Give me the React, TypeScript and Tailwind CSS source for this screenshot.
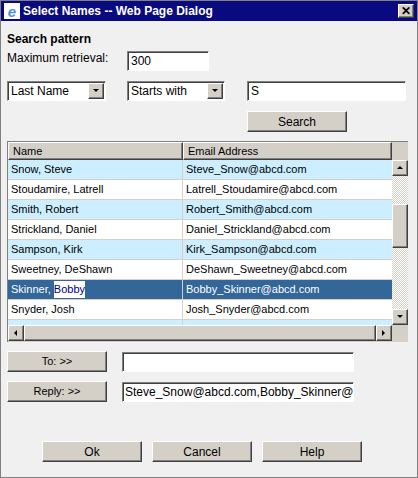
import React from "react";

const F = { fontFamily: '"Liberation Sans", Arial, sans-serif' };
const btn = "bg-[#d4d0c8] border border-t-white border-l-white border-r-[#404040] border-b-[#404040] shadow-[inset_-1px_-1px_0_#808080] text-[12px] text-black flex items-center justify-center";
const inset = "bg-white border border-t-[#808080] border-l-[#808080] border-r-white border-b-white shadow-[inset_1px_1px_0_#404040]";

const rows = [
  ["Snow, Steve", "Steve_Snow@abcd.com"],
  ["Stoudamire, Latrell", "Latrell_Stoudamire@abcd.com"],
  ["Smith, Robert", "Robert_Smith@abcd.com"],
  ["Strickland, Daniel", "Daniel_Strickland@abcd.com"],
  ["Sampson, Kirk", "Kirk_Sampson@abcd.com"],
  ["Sweetney, DeShawn", "DeShawn_Sweetney@abcd.com"],
  ["Skinner, Bobby", "Bobby_Skinner@abcd.com"],
  ["Snyder, Josh", "Josh_Snyder@abcd.com"],
];

function Arrow({ d }: { d: "up" | "down" | "left" | "right" }) {
  const pts = { up: "1,5 4,2 7,5", down: "1,2 4,5 7,2", left: "5,1 2,4 5,7", right: "2,1 5,4 2,7" }[d];
  return <svg width="8" height="8" viewBox="0 0 8 8"><polygon points={pts} fill="#000" /></svg>;
}

function Select({ label, w }: { label: string; w: string }) {
  return (
    <div className={`${inset} ${w} h-[20px] flex items-center justify-between pl-[3px] pr-[1px]`}>
      <span className="text-[12px] leading-none">{label}</span>
      <div className={`${btn} w-[16px] h-[16px]`}><Arrow d="down" /></div>
    </div>
  );
}

export default function App() {
  return (
    <div style={F} className="w-[418px] h-[478px] bg-[#f0f0f0] border border-[#808080] flex flex-col text-[12px] text-black overflow-hidden">
      <div className="h-[20px] bg-[#0a0a80] flex items-center justify-between px-[3px] shrink-0">
        <div className="flex items-center gap-[3px]">
          <div className="w-[16px] h-[16px] flex items-center justify-center text-[#4a90e8] font-bold italic text-[15px] bg-white leading-none">e</div>
          <span className="text-white font-bold text-[12px]">Select Names -- Web Page Dialog</span>
        </div>
        <div className={`${btn} w-[16px] h-[14px] text-[11px] font-bold`}>✕</div>
      </div>
      <div className="flex flex-col pl-[6px] pr-[10px]">
        <div className="font-bold mt-[11px] h-[15px] leading-[15px]">Search pattern</div>
        <div className="flex items-start mt-[4px] h-[21px]">
          <span className="w-[120px] leading-[15px]">Maximum retrieval:</span>
          <div className={`${inset} w-[82px] h-[20px] flex items-center pl-[3px]`}>300</div>
        </div>
        <div className="flex mt-[9px] h-[20px]">
          <Select label="Last Name" w="w-[99px]" />
          <div className="w-[21px]" />
          <Select label="Starts with" w="w-[98px]" />
          <div className="w-[22px]" />
          <div className={`${inset} w-[159px] h-[20px] flex items-center pl-[3px]`}>S</div>
        </div>
        <div className="flex mt-[10px]">
          <div className="w-[240px]" />
          <div className={`${btn} w-[100px] h-[21px]`}>Search</div>
        </div>
        <div className="mt-[9px] w-[401px] h-[201px] border-t border-l border-[#808080] bg-[#d4d0c8] flex flex-col text-[11px]">
          <div className="flex h-[18px]">
            <div className={`${btn} !text-[11px] w-[175px] !justify-start pl-[4px]`}>Name</div>
            <div className={`${btn} !text-[11px] w-[209px] !justify-start pl-[4px]`}>Email Address</div>
          </div>
          <div className="flex h-[165px]">
            <div className="w-[384px] flex flex-col overflow-hidden bg-white">
              {rows.map(([n, e], i) => {
                const sel = i === 6;
                const bg = sel ? "bg-[#336699] text-white" : i % 2 === 0 ? "bg-[#cceeff]" : "bg-white";
                return (
                  <div key={i} className={`flex h-[20px] shrink-0 border-b border-[#d4d0c8] ${bg}`}>
                    <div className="w-[175px] pl-[3px] border-r border-[#d4d0c8] flex items-center">
                      {sel ? (<>Skinner,&nbsp;<span className="bg-white text-[#000080]">Bobby</span></>) : n}
                    </div>
                    <div className="flex-1 pl-[3px] flex items-center">{e}</div>
                  </div>
                );
              })}
              <div className="flex h-[6px] shrink-0 bg-[#cceeff]"><div className="w-[175px] border-r border-[#d4d0c8]" /></div>
            </div>
            <div className="w-[16px] flex flex-col bg-[repeating-conic-gradient(#d4d0c8_0%_25%,#ffffff_0%_50%)] bg-[length:2px_2px]">
              <div className={`${btn} h-[16px]`}><Arrow d="up" /></div>
              <div className="h-[28px]" />
              <div className={`${btn} h-[44px]`} />
              <div className="flex-1" />
              <div className={`${btn} h-[16px]`}><Arrow d="down" /></div>
            </div>
          </div>
          <div className="flex h-[16px] w-[384px]">
            <div className={`${btn} w-[16px]`}><Arrow d="left" /></div>
            <div className={`${btn} flex-1`} />
            <div className={`${btn} w-[16px]`}><Arrow d="right" /></div>
          </div>
        </div>
        <div className="flex mt-[9px] h-[21px] items-center">
          <div className={`${btn} w-[100px] h-[21px] !text-[11px]`}>To: &gt;&gt;</div>
          <div className="w-[15px]" />
          <div className={`${inset} w-[232px] h-[20px]`} />
        </div>
        <div className="flex mt-[9px] h-[21px] items-center">
          <div className={`${btn} w-[100px] h-[21px] !text-[11px]`}>Reply: &gt;&gt;</div>
          <div className="w-[15px]" />
          <div className={`${inset} w-[232px] h-[20px] flex items-center pl-[2px] overflow-hidden whitespace-nowrap`}>Steve_Snow@abcd.com,Bobby_Skinner@</div>
        </div>
        <div className="flex mt-[39px] pl-[35px] gap-[10px]">
          <div className={`${btn} w-[100px] h-[21px]`}>Ok</div>
          <div className={`${btn} w-[100px] h-[21px]`}>Cancel</div>
          <div className={`${btn} w-[100px] h-[21px]`}>Help</div>
        </div>
      </div>
    </div>
  );
}
